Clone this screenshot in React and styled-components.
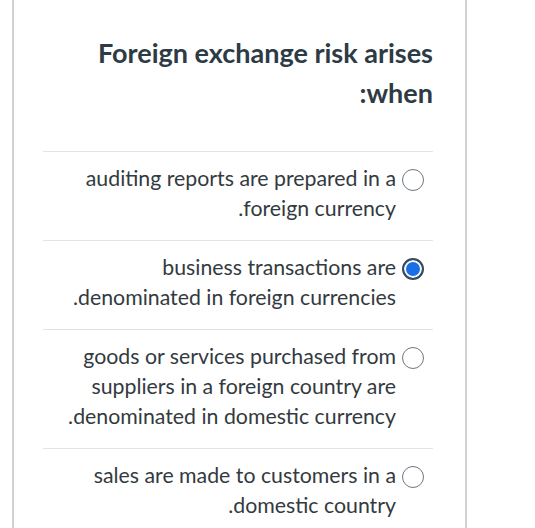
import React from 'react'
import styled, { createGlobalStyle } from 'styled-components'

const GlobalStyle = createGlobalStyle`
  body {
    margin: 0;
    background: #fff;
    font-family: Lato, "Noto Sans", sans-serif;
  }
`

const options = [
  { text: 'auditing reports are prepared in a foreign currency.', checked: false },
  { text: 'business transactions are denominated in foreign currencies.', checked: true },
  { text: 'goods or services purchased from suppliers in a foreign country are denominated in domestic currency.', checked: false },
  { text: 'sales are made to customers in a domestic country.', checked: false },
]

export default function App() {
  return (
    <>
      <GlobalStyle />
      <Card>
        <Question>Foreign exchange risk arises when:</Question>
        <List>
          {options.map((o, i) => (
            <Option key={i}>
              <Radio checked={o.checked} />
              <Label>{o.text}</Label>
            </Option>
          ))}
        </List>
      </Card>
    </>
  )
}

const Card = styled.div`
  direction: rtl;
  box-sizing: border-box;
  margin-left: 12px;
  width: 455px;
  min-height: 528px;
  border-left: 2px solid #d2d2d2;
  border-right: 2px solid #d2d2d2;
  padding: 33px 32px 0 29px;
  color: #2d3b45;
`

const Question = styled.div`
  font-size: 27px;
  font-weight: 700;
  line-height: 40px;
  margin-bottom: 38px;
`

const List = styled.div`
  display: flex;
  flex-direction: column;
`

const Option = styled.div`
  display: flex;
  align-items: flex-start;
  gap: 6px;
  border-top: 1px solid #e3e3e3;
  padding: 11px 9px 17px 0;
`

const Radio = styled.span`
  flex: none;
  box-sizing: border-box;
  width: 22px;
  height: 22px;
  margin-top: 6px;
  border-radius: 50%;
  border: ${p => (p.checked ? '2px solid #3b4a58' : '1.5px solid #6f7880')};
  background: ${p => (p.checked ? '#1b6fe6' : '#fff')};
  box-shadow: ${p => (p.checked ? 'inset 0 0 0 2px #fff' : 'none')};
`

const Label = styled.div`
  width: 354px;
  font-size: 21.3px;
  line-height: 30px;
  color: #333a40;
`
